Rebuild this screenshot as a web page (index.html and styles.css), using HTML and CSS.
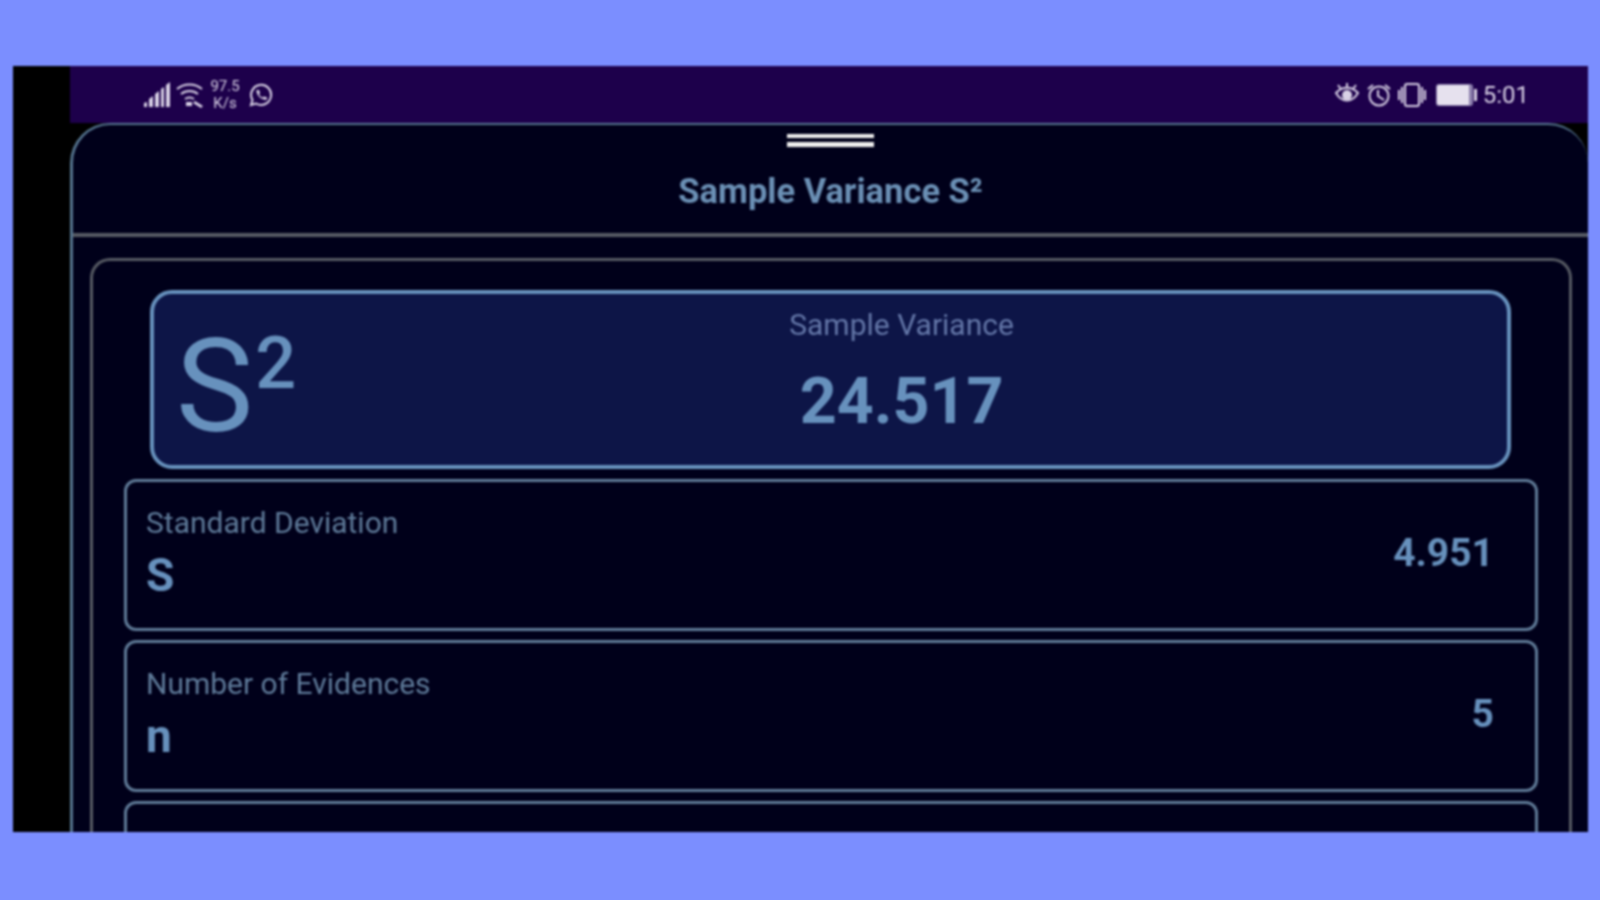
FILE: index.html
```html
<!doctype html>
<html>
<head>
<meta charset="utf-8">
<title>Sample Variance</title>
<link rel="stylesheet" href="styles.css">
</head>
<body>
	<div class="screen">
		<div class="cutout"></div>
		<div class="main">
			<div class="status">
				<div class="status-group">
					<svg class="ic-signal" viewBox="0 0 26 25"><path d="M0 25v-4l3-1v5zM5 25v-8l4-3v11zM11 25v-13l4-3v16zM17 25v-18l3-2v20zM22 25v-22l4-3v25z"/></svg>
					<svg class="ic-wifi" viewBox="0 0 27 26"><path class="line" d="M1 7c7-6 18-6 25 0M5 12c5-4 12-4 17 0M9 17c3-2 6-2 9 0"/><path d="M10 20h6v4h-6zM19 19l8 5-2 2-8-5z"/></svg>
					<div class="speed"><span>97.5</span><span>K/s</span></div>
					<svg class="ic-chat" viewBox="0 0 24 24"><path class="line" d="M2 22l1.500-5a10 10 0 1 1 3.500 3.500z"/><path d="M8 7l2 0 1 3-1 1.500c1 1.500 2 2.500 3.500 3l1.500-1 3 1v2c-5 1-11-4-10.500-9.500z"/></svg>
				</div>
				<div class="status-group right">
					<svg class="ic-eye" viewBox="0 0 26 24"><path class="line" d="M2 10c6-7 16-7 22 0-6 10-16 10-22 0zM4 2l3 4M13 0v4M22 2l-3 4"/><circle cx="13" cy="12" r="5"/></svg>
					<svg class="ic-alarm" viewBox="0 0 24 24"><circle class="line" cx="12" cy="13" r="9.500"/><path class="line" d="M11 7v6l6 4M1 6l5-4M23 6l-5-4"/></svg>
					<svg class="ic-vibrate" viewBox="0 0 30 24"><rect class="line" x="8" y="1" width="14" height="22" rx="2"/><path class="line" d="M2 7v10M5 4v16M25 4v16M28 7v10"/></svg>
					<div class="battery"><span class="battery-level"></span></div>
					<span class="time">5:01</span>
				</div>
			</div>
			<div class="sheet">
				<div class="sheet-head">
					<div class="handle"></div>
					<h1 class="sheet-title">Sample Variance S²</h1>
				</div>
				<div class="sheet-body">
					<div class="panel">
						<div class="result">
							<div class="result-symbol">S<sup>2</sup></div>
							<div class="result-text">
								<div class="result-label">Sample Variance</div>
								<div class="result-value">24.517</div>
							</div>
						</div>
						<div class="row">
							<div class="row-main">
								<div class="row-label">Standard Deviation</div>
								<div class="row-symbol">S</div>
							</div>
							<div class="row-value">4.951</div>
						</div>
						<div class="row">
							<div class="row-main">
								<div class="row-label">Number of Evidences</div>
								<div class="row-symbol">n</div>
							</div>
							<div class="row-value">5</div>
						</div>
						<div class="row"></div>
					</div>
				</div>
			</div>
		</div>
	</div>
</body>
</html>
```
FILE: styles.css
```css
* { margin:0; padding:0; box-sizing:border-box; }
html, body { height:100%; }
body { background:#7b8eff; padding:66px 12px 68px 13px; font-family:Roboto, "Liberation Sans", sans-serif; overflow:hidden; }

.screen { display:flex; height:766px; background:#000; overflow:hidden; filter:blur(0.8px); }
.cutout { flex:0 0 57px; background:#000; }
.main { flex:1; display:flex; flex-direction:column; min-width:0; }

.status { flex:0 0 57px; display:flex; justify-content:space-between; align-items:center; padding:0 59px 0 74px; background:#1d004b; color:#d9d2e6; }
.status-group { display:flex; align-items:center; gap:6px; }
.status-group.right { gap:6px; }
.status svg { display:block; fill:#d9d2e6; }
.status svg .line { fill:none; stroke:#d9d2e6; stroke-width:2; }
.ic-signal { width:26px; height:25px; }
.ic-wifi { width:27px; height:26px; }
.ic-chat { width:24px; height:24px; margin-left:2px; }
.ic-eye { width:26px; height:24px; margin-right:1px; }
.ic-alarm { width:24px; height:24px; }
.ic-vibrate { width:30px; height:24px; margin-right:4px; }
.speed { display:flex; flex-direction:column; align-items:center; width:32px; font-size:15px; line-height:17px; }
.battery { display:flex; width:40px; height:20px; padding:0 5px 0 0; position:relative; }
.battery-level { flex:1; background:#e6e1ee; border-right:3px solid #8d80ad; border-radius:2px; box-shadow:0 0 0 1px #8d80ad; }
.battery::after { content:""; position:absolute; right:0; top:4px; width:3px; height:12px; background:#d9d2e6; }
.time { font-size:24px; line-height:28px; }

.sheet { flex:1; min-height:0; display:flex; flex-direction:column; background:#00001a; border:solid #55748f; border-width:2px 0 0 3px; border-radius:40px 40px 0 0; }
.sheet-head { flex:0 0 112px; display:flex; flex-direction:column; align-items:center; padding-top:9px; border-bottom:4px solid #565a63; }
.handle { width:87px; height:13px; border:solid #eee; border-width:4px 0 5px; }
.sheet-title { margin-top:23px; font-size:34.500px; line-height:42px; font-weight:700; color:#6b90b5; }

.sheet-body { flex:1; min-height:0; padding:21px 16px 0 17px; }
.panel { display:flex; flex-direction:column; gap:9px; height:100%; padding:29px 31px 0 31px; border:solid #565a63; border-width:3px 3px 0; border-radius:20px 20px 0 0; }

.result { flex:0 0 179px; display:flex; margin:0 27px 1px 26px; background:#0d1547; border:4px solid #6791bd; border-radius:22px; }
.result-symbol { flex:0 0 141px; padding:19px 0 0 22px; font-size:130px; line-height:148px; color:#6791bd; white-space:nowrap; }
.result-symbol sup { margin-left:2px; font-size:72px; font-weight:500; line-height:0; vertical-align:43px; }
.result-text { flex:1; display:flex; flex-direction:column; align-items:center; padding-top:13px; }
.result-label { font-size:30px; line-height:36px; color:#6477a8; }
.result-value { margin-top:20px; font-size:64.500px; line-height:76px; font-weight:700; color:#6791bd; }

.row { flex:0 0 152px; display:flex; justify-content:space-between; align-items:center; padding:0 41px 0 19px; border:3px solid #5f7a97; border-radius:12px; }
.row-main { margin-bottom:4px; }
.row-label { font-size:30px; line-height:36px; color:#5e7a99; }
.row-symbol { margin-top:7px; font-size:46px; line-height:54px; font-weight:700; color:#6791bd; }
.row-value { margin-bottom:4px; font-size:39px; line-height:46px; font-weight:700; color:#6791bd; }
```
